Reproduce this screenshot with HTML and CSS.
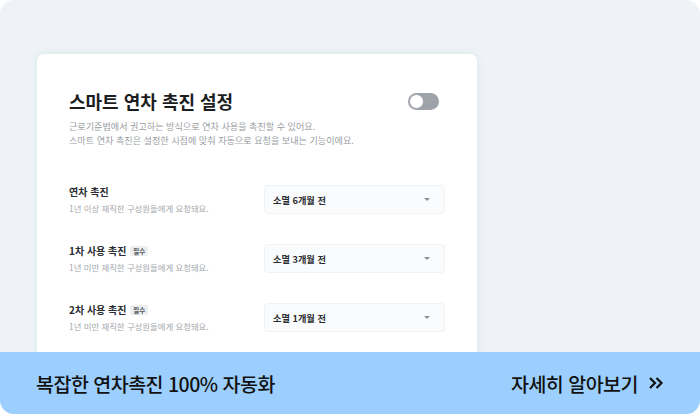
FILE: index.html
```html
<!DOCTYPE html>
<html lang="ko">
<head>
    <meta charset="UTF-8">
    <title>스마트 연차 촉진 설정</title>
    <link rel="stylesheet" href="styles.css">
</head>
<body>
    <div class="frame">
        <div class="stage">
            <div class="card">
                <div class="card-head">
                    <h1 class="title">스마트 연차 촉진 설정</h1>
                    <div class="toggle"><span class="knob"></span></div>
                </div>
                <p class="desc">근로기준법에서 권고하는 방식으로 연차 사용을 촉진할 수 있어요.<br>스마트 연차 촉진은 설정한 시점에 맞춰 자동으로 요청을 보내는 기능이에요.</p>

                <div class="row">
                    <div class="row-text">
                        <div class="label">연차 촉진</div>
                        <div class="sub">1년 이상 재직한 구성원들에게 요청돼요.</div>
                    </div>
                    <div class="select">소멸 6개월 전<span class="caret"></span></div>
                </div>

                <div class="row">
                    <div class="row-text">
                        <div class="label">1차 사용 촉진 <span class="badge">필수</span></div>
                        <div class="sub">1년 미만 재직한 구성원들에게 요청돼요.</div>
                    </div>
                    <div class="select">소멸 3개월 전<span class="caret"></span></div>
                </div>

                <div class="row">
                    <div class="row-text">
                        <div class="label">2차 사용 촉진 <span class="badge">필수</span></div>
                        <div class="sub">1년 미만 재직한 구성원들에게 요청돼요.</div>
                    </div>
                    <div class="select">소멸 1개월 전<span class="caret"></span></div>
                </div>
            </div>
        </div>
        <div class="banner">
            <span class="banner-text">복잡한 연차촉진 100% 자동화</span>
            <span class="banner-link">자세히 알아보기
                <svg width="16" height="14" viewBox="0 0 16 14"><path d="M2 2 L7 7 L2 12 M8.5 2 L13.5 7 L8.5 12" fill="none" stroke="#111" stroke-width="2.2"/></svg>
            </span>
        </div>
    </div>
</body>
</html>
```

FILE: styles.css
```css
body {
    margin: 0;
    background: white;
    font-family: "Noto Sans CJK KR", "Noto Sans", sans-serif;
}
.frame {
    width: 700px;
    height: 414px;
    background: #eff3f7;
    border-radius: 14px;
    overflow: hidden;
    display: flex;
    flex-direction: column;
}
.stage {
    flex: 1;
    padding: 54px 0 0 37px;
    overflow: hidden;
}
.card {
    width: 440px;
    height: 320px;
    box-sizing: border-box;
    background: white;
    border-radius: 7px;
    box-shadow: 0 0 6px rgba(190, 225, 225, 0.5);
    padding: 32px 32px 0 32px;
}
.card-head {
    display: flex;
    align-items: center;
    justify-content: space-between;
    padding-right: 6px;
}
.title {
    margin: 0;
    font-size: 18px;
    font-weight: 700;
    color: #1b1d1f;
    line-height: 30px;
}
.toggle {
    width: 31px;
    height: 17px;
    border-radius: 9px;
    background: #9ea3a9;
    position: relative;
}
.knob {
    position: absolute;
    left: 1px;
    top: 1px;
    width: 13px;
    height: 13px;
    border-radius: 50%;
    background: white;
    border: 1px solid #9ea3a9;
}
.desc {
    margin: 3px 0 38px 0;
    font-size: 9.1px;
    line-height: 14px;
    color: #9a9ea3;
}
.row {
    display: flex;
    align-items: center;
    justify-content: space-between;
    margin-bottom: 30px;
}
.label {
    font-size: 10px;
    font-weight: 700;
    color: #2a2d31;
    line-height: 14px;
}
.sub {
    font-size: 8.4px;
    color: #a4a8ad;
    line-height: 12px;
    margin-top: 3px;
}
.badge {
    display: inline-block;
    font-size: 6.5px;
    font-weight: 700;
    color: #555a60;
    background: #eceef0;
    border-radius: 2px;
    padding: 0 3px;
    line-height: 10px;
    vertical-align: 1px;
    margin-left: 1px;
}
.select {
    width: 181px;
    height: 29px;
    box-sizing: border-box;
    background: #fafbfc;
    border: 1px solid #f1f2f4;
    border-radius: 4px;
    display: flex;
    align-items: center;
    justify-content: space-between;
    padding: 0 14px 0 8px;
    font-size: 9.2px;
    font-weight: 700;
    color: #2a2d31;
}
.caret {
    width: 0;
    height: 0;
    border-left: 3px solid transparent;
    border-right: 3px solid transparent;
    border-top: 3px solid #8a8f95;
}
.banner {
    height: 62px;
    flex-shrink: 0;
    background: #9ccffd;
    display: flex;
    align-items: center;
    justify-content: space-between;
    padding: 0 36px 0 36px;
}
.banner-text, .banner-link {
    font-size: 19.5px;
    font-weight: 500;
    color: #111;
    letter-spacing: -0.5px;
}
.banner-link {
    display: flex;
    align-items: center;
    gap: 10px;
}
```
